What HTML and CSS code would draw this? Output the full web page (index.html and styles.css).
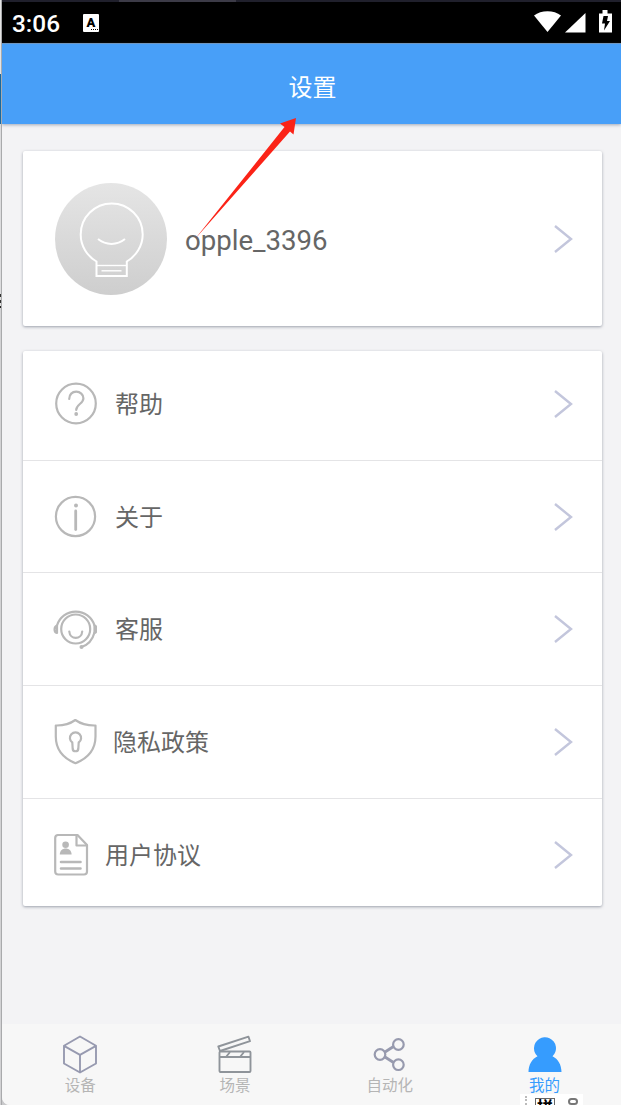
FILE: index.html
```html
<!DOCTYPE html>
<html lang="zh-CN">
<head>
  <meta charset="UTF-8">
  <meta name="viewport" content="width=device-width, initial-scale=1.0">
  <title>设置</title>
  <link rel="stylesheet" href="styles.css">
</head>
<body>
  <div class="desktop-edge"></div>
  <div class="phone">
    <div class="window-top"></div>
    <div class="status-bar">
      <span class="time">3:06</span>
      <span class="input-badge">A<i></i></span>
      <svg class="status-icons" width="82" height="24" viewBox="0 0 82 24">
        <path d="M0 5.500C7-.2 20-.2 27 5.500L13.500 22z" fill="#fff"/>
        <path d="M51.500 3v19.500H31z" fill="#fff"/>
        <path d="M65 3.500h3.500V0h5v3.500H78v19H65z" fill="#fff"/>
        <path d="M69.500 6h4.500l-1 5h3l-6 9.500 1-7h-3z" fill="#000"/>
      </svg>
    </div>
    <header class="header">设置</header>

    <main class="content">
      <section class="card profile">
        <svg width="112" height="112" viewBox="0 0 112 112">
          <defs>
            <linearGradient id="avatar" x1="0" y1="0" x2="0" y2="1">
              <stop offset="0" stop-color="#e5e5e5"/>
              <stop offset="1" stop-color="#cecece"/>
            </linearGradient>
          </defs>
          <circle cx="56" cy="56" r="56" fill="url(#avatar)"/>
          <g fill="none" stroke="#fff" stroke-width="2">
            <path d="M41.500 93V78.500C32 73 25.700 63 25.700 51.500a31 31 0 0 1 62 0C87.700 63 81 73 71.800 78.500V93z"/>
            <path d="M41.500 82.500h30.300" stroke-width="1.400"/>
            <path d="M46.500 87.800h20" stroke-width="1.400"/>
            <path d="M43 56c8 6.500 19 6.500 27 0"/>
          </g>
        </svg>
        <span class="name">opple_3396</span>
        <svg class="chevron" width="20" height="30" viewBox="0 0 20 30"><path d="M2 2l16 13L2 28"/></svg>
      </section>

      <section class="card menu">
        <div class="row">
          <svg class="icon" width="44" height="48" viewBox="0 0 44 48">
            <circle cx="23" cy="23.500" r="19.800"/>
            <path d="M16.200 19c0-4.600 3-7.300 7-7.300s7.200 2.800 7.200 6.500c0 5.800-7.200 5.800-7.200 11.800"/>
            <circle class="solid" cx="23.200" cy="34" r="1.900"/>
          </svg>
          <span>帮助</span>
          <svg class="chevron" width="20" height="30" viewBox="0 0 20 30"><path d="M2 2l16 13L2 28"/></svg>
        </div>
        <div class="row">
          <svg class="icon" width="44" height="48" viewBox="0 0 44 48">
            <circle cx="22.500" cy="23.500" r="19.600"/>
            <circle class="solid" cx="23" cy="12.500" r="2"/>
            <path d="M22.700 18v18.500" stroke-width="2.800"/>
          </svg>
          <span>关于</span>
          <svg class="chevron" width="20" height="30" viewBox="0 0 20 30"><path d="M2 2l16 13L2 28"/></svg>
        </div>
        <div class="row">
          <svg class="icon" width="44" height="48" viewBox="0 0 44 48">
            <circle cx="22.700" cy="24" r="14.500"/>
            <path d="M4 20.500a19.600 19.600 0 0 1 37.500 0"/>
            <path d="M41.500 27.500C39.500 35 35 40 28.500 42"/>
            <path d="M4 20.500c-3 1-3.500 6.500 0 7.500z"/>
            <path d="M41.500 20.500c3 1 3 6.500 0 7.500z"/>
            <path d="M16.300 26.500c.5 8.500 12.400 8.500 12.900 0"/>
            <circle class="solid" cx="28.500" cy="42" r="2"/>
          </svg>
          <span>客服</span>
          <svg class="chevron" width="20" height="30" viewBox="0 0 20 30"><path d="M2 2l16 13L2 28"/></svg>
        </div>
        <div class="row privacy">
          <svg class="icon" width="44" height="48" viewBox="0 0 44 48">
            <path d="M22.300 2c-5.500 4-12 5.700-19.500 5.500v11C2.800 31 9.500 40 22.500 45.200 35.500 40 42.500 31 42.500 18.500v-11C34.500 7.700 28 6 22.300 2z"/>
            <path d="M19.300 24.500a5.600 5.600 0 1 1 6.400 0l-.4 6.500c-.4 3-5.200 3-5.600 0z"/>
          </svg>
          <span>隐私政策</span>
          <svg class="chevron" width="20" height="30" viewBox="0 0 20 30"><path d="M2 2l16 13L2 28"/></svg>
        </div>
        <div class="row terms">
          <svg class="icon" width="44" height="48" viewBox="0 0 44 48">
            <path d="M4.500 4H24.500L34 14v26.500q0 3-3 3H5.200q-3 0-3-3V7q0-3 3-3z"/>
            <path d="M23.500 4.500V14.500H34"/>
            <circle class="solid" cx="12.600" cy="13.700" r="3.300"/>
            <path class="solid" d="M6.800 23.500c0-8 11.800-8 11.800 0z"/>
            <path d="M8 31h19.500M8 37.500h19.500" stroke-width="2.600"/>
          </svg>
          <span>用户协议</span>
          <svg class="chevron" width="20" height="30" viewBox="0 0 20 30"><path d="M2 2l16 13L2 28"/></svg>
        </div>
      </section>
    </main>

    <nav class="tabs">
      <div class="tab">
        <svg width="40" height="40" viewBox="0 0 40 40">
          <path d="M20 2.500l16 9.300V29.500L20 38.500 4 29.500V11.800zM4 11.800l16 9 16-9M20 20.800v17.700" stroke="#979ab0"/>
        </svg>
        <span>设备</span>
      </div>
      <div class="tab">
        <svg width="40" height="40" viewBox="0 0 40 40">
          <g stroke="#8f949a">
            <rect x="4.500" y="17.500" width="31" height="20.500" rx="1"/>
            <path d="M4.500 23h31M11 23l4-5M25 23l4-5"/>
            <path d="M3.300 12.500L33.500 2.700l1.500 4.500L5 17z"/>
          </g>
        </svg>
        <span>场景</span>
      </div>
      <div class="tab">
        <svg width="40" height="40" viewBox="0 0 40 40">
          <g stroke="#979aae" stroke-width="2.200">
            <circle cx="10" cy="20.500" r="5.300"/>
            <circle cx="28.400" cy="10.500" r="5.300"/>
            <circle cx="28.400" cy="30.700" r="5.300"/>
            <path d="M15 18l8.500-5.500M15 23l8.500 5.500" stroke-width="2.800"/>
          </g>
        </svg>
        <span>自动化</span>
      </div>
      <div class="tab active">
        <svg width="40" height="40" viewBox="0 0 40 40">
          <path d="M9 14a11 11 0 1 1 18.500 8.300C33 25 36.500 31 36.500 38h-33c0-7 3.500-13 9-15.700A11 11 0 0 1 9 14z" fill="#369cfe"/>
        </svg>
        <span>我的</span>
      </div>
    </nav>
  </div>

  <svg class="pointer" width="104" height="124" viewBox="0 0 104 124">
    <path d="M102 2L86 7.500l4.500 3.500L1 123 96 15.500l3.500 3z"/>
  </svg>

  <!-- floating input method bar, cut off by the window bottom -->
  <div class="ime">
    <i class="grip"></i>
    <span class="ime-mode">拼</span>
    <i class="ime-dot"></i>
  </div>
</body>
</html>
```
FILE: styles.css
```css
* {
  box-sizing: border-box;
}
body {
  margin: 0;
  height: 1105px;
  display: flex;
  overflow: hidden;
  background: #c9c9cb;
  font-family: Roboto, "Noto Sans CJK SC", sans-serif;
  color: #666;
}
.desktop-edge {
  width: 2px;
  border-right: 1px solid #a9aaac;
  background: linear-gradient(#e4e4e4 74px, #17689f 74px, #17689f 124px, #dcdcde 124px, #dcdcde 294px, #333 294px, #333 297px, #ddd 297px, #ddd 300px, #333 300px, #333 303px, #ddd 303px, #ddd 306px, #222 306px, #222 308px, #d2d2d4 308px);
}
.phone {
  flex: 1;
  display: flex;
  flex-direction: column;
  background: #f3f3f5;
  border-bottom-left-radius: 8px;
  overflow: hidden;
}
.window-top {
  height: 2px;
  background: linear-gradient(90deg, #20202c 117px, #3c3b47 117px, #3c3b47 234px, #20202c 234px);
}
.status-bar {
  height: 41px;
  display: flex;
  align-items: center;
  padding: 0 7px 0 10px;
  background: #000;
  color: #fff;
}
.time {
  width: 71px;
  padding-top: 1px;
  font-size: 24.4px;
  font-weight: 500;
}
.input-badge {
  position: relative;
  width: 16px;
  height: 18px;
  border-radius: 1px;
  background: #fff;
  color: #000;
  font-size: 13px;
  font-weight: 900;
  line-height: 17px;
  text-align: center;
}
.input-badge i {
  position: absolute;
  right: 1px;
  bottom: 2px;
  width: 7px;
  border-bottom: 1px dotted #000;
}
.status-icons {
  margin-left: auto;
  margin-right: -2px;
  margin-top: -2px;
}
.header {
  height: 81px;
  padding: 2px 0 0 2px;
  display: flex;
  align-items: center;
  justify-content: center;
  background: #489ff8;
  border-top: 1px solid #6f96c0;
  box-shadow: 0 1px 3px rgba(60, 80, 110, 0.45);
  color: #fff;
  font-size: 24px;
  z-index: 1;
}
.content {
  flex: 1;
  padding: 27px 19px 0 21px;
}
.card {
  background: #fff;
  border-radius: 2px;
  box-shadow: 0 1px 3px rgba(70, 80, 100, 0.5);
}
.profile {
  height: 175px;
  display: flex;
  align-items: center;
  padding: 0 29px 0 32px;
  margin-bottom: 25px;
}
.name {
  margin-left: 18px;
  padding-top: 3px;
  font-size: 27.6px;
}
.chevron {
  margin-left: auto;
  fill: none;
  stroke: #c3c6dc;
  stroke-width: 2.4;
}
.row {
  height: 113px;
  display: flex;
  align-items: center;
  padding: 0 29px 0 30px;
  border-bottom: 1px solid #e4e4e6;
  font-size: 24px;
}
.row span {
  padding-bottom: 3px;
}
.row:first-child {
  height: 110px;
  padding-bottom: 4px;
}
.row:nth-child(2) {
  height: 112px;
}
.row:last-child {
  height: 107px;
  padding-top: 5px;
  border-bottom: none;
}
.icon {
  margin-right: 18px;
  fill: none;
  stroke: #b8b8b8;
  stroke-width: 2.2;
  stroke-linecap: round;
  stroke-linejoin: round;
}
.icon .solid {
  fill: #b8b8b8;
  stroke: none;
}
.privacy .icon {
  margin-right: 16px;
}
.terms .icon {
  margin-right: 8px;
}
.tabs {
  height: 81px;
  display: flex;
  padding-left: 1px;
  margin-right: -1px;
  background: #f7f7f7;
}
.tab {
  flex: 1;
  display: flex;
  flex-direction: column;
  align-items: center;
  padding-top: 10px;
  color: #b5b5b5;
  font-size: 15.5px;
  line-height: 24px;
}
.tab svg {
  fill: none;
  stroke-width: 1.9;
  stroke-linejoin: round;
}
.active {
  color: #369cfe;
}
.pointer {
  position: absolute;
  left: 194px;
  top: 116px;
  z-index: 2;
  fill: #fb2317;
}
.ime {
  position: absolute;
  left: 520px;
  top: 1094px;
  width: 63px;
  height: 11px;
  display: flex;
  padding: 4px 5px 0;
  overflow: hidden;
  background: #fff;
}
.grip {
  height: 12px;
  margin-top: -2px;
  border-left: 2px dotted #bbb;
}
.ime-mode {
  width: 20px;
  height: 20px;
  margin-left: 8px;
  border: 1px solid #666;
  color: #000;
  font-size: 16px;
  font-weight: 700;
  line-height: 18px;
  text-align: center;
}
.ime-dot {
  width: 10px;
  height: 7px;
  margin-left: 13px;
  border: 2px solid #777;
  border-radius: 4px;
}
```
